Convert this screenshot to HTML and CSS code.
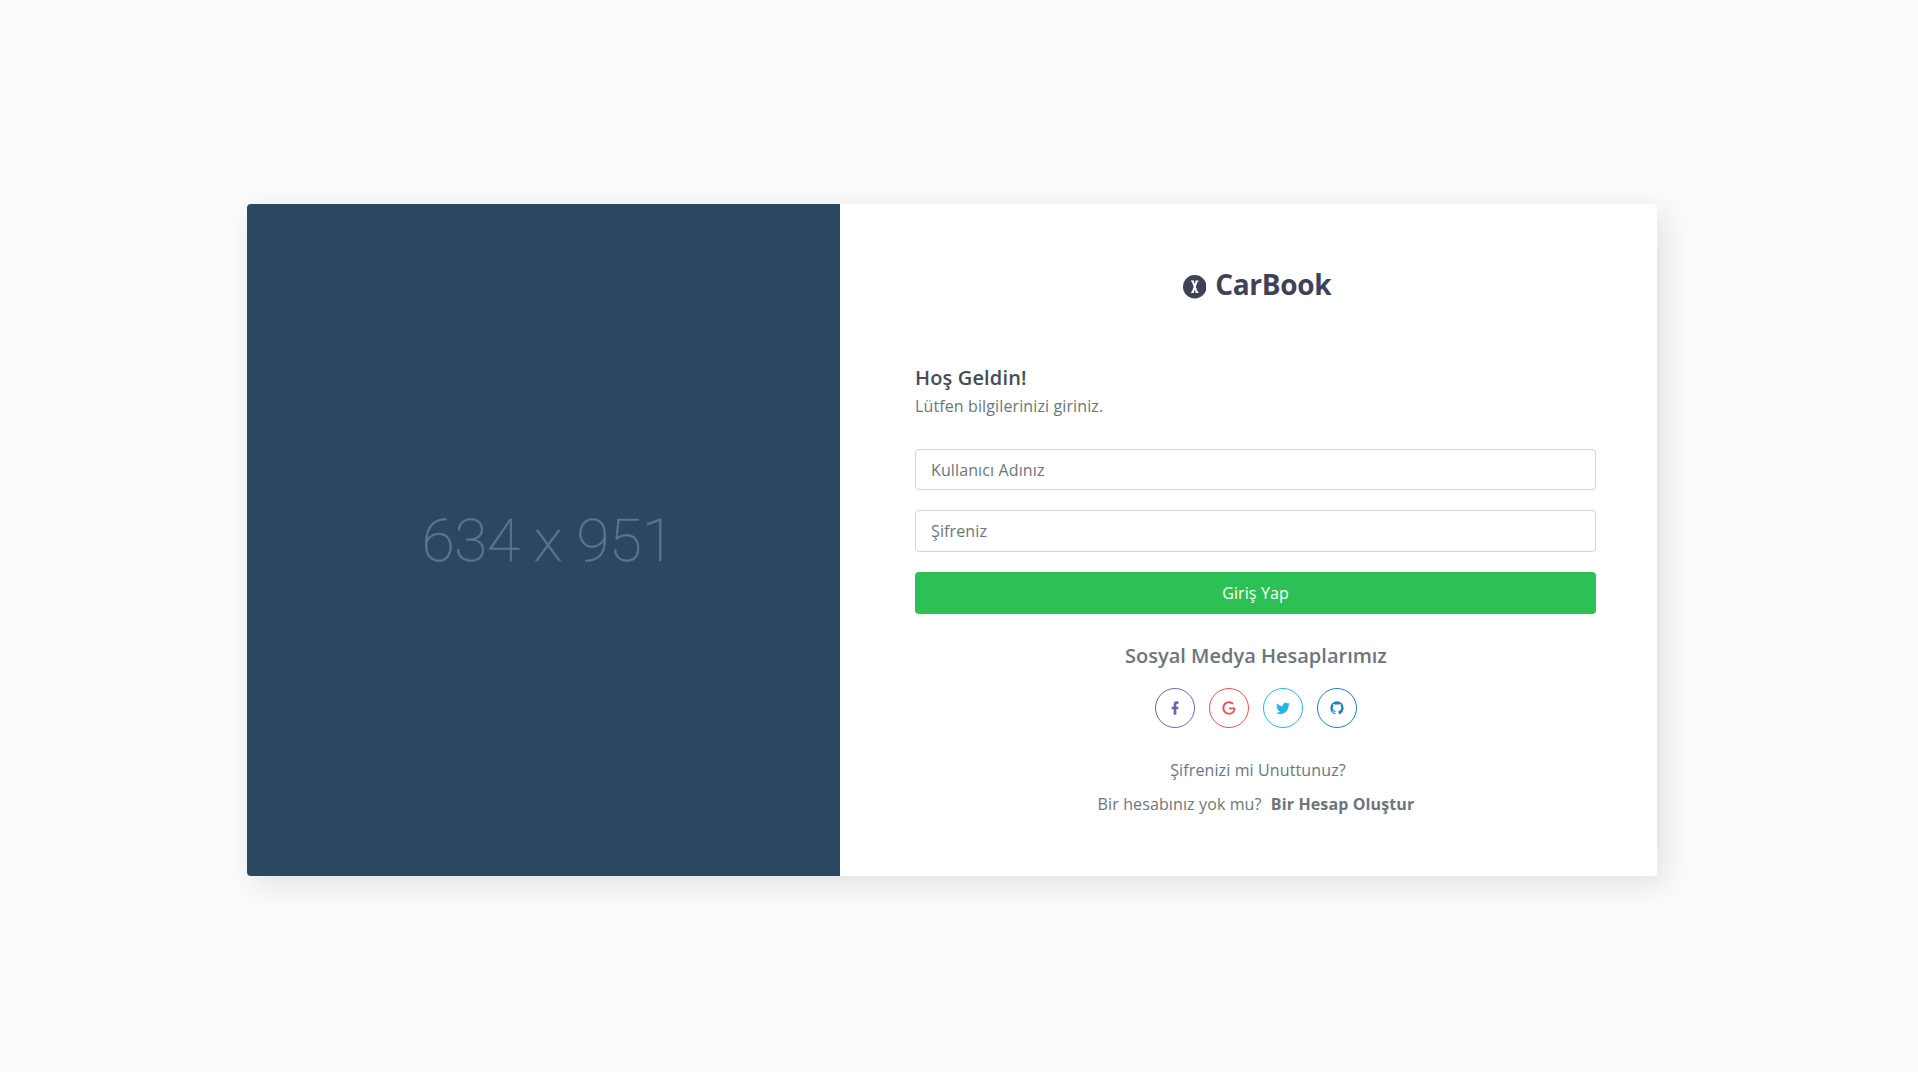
FILE: index.html
```html
<!DOCTYPE html>
<html lang="tr">
<head>
<meta charset="utf-8">
<title>CarBook</title>
<link rel="stylesheet" href="styles.css">
</head>
<body>
<main class="card">
  <div class="cover"><span class="cover-size">634 x 951</span></div>
  <section class="panel">
    <div class="brand">
      <svg class="brand-icon" viewBox="0 0 24 24"><circle cx="12" cy="12" r="12" fill="#3e4257"/><path d="M9.9 6.2L14.1 17.8M14.1 6.2L9.9 17.8" fill="none" stroke="#fff" stroke-width="2"/><path d="M8.2 6.2h3M12.8 6.2h3M8.2 17.8h3M12.8 17.8h3" fill="none" stroke="#fff" stroke-width="1.2"/></svg>
      <span>CarBook</span>
    </div>
    <h5 class="welcome">Hoş Geldin!</h5>
    <p class="lead">Lütfen bilgilerinizi giriniz.</p>
    <form class="form">
      <input class="field" type="text" placeholder="Kullanıcı Adınız">
      <input class="field" type="password" placeholder="Şifreniz">
      <button class="submit" type="button">Giriş Yap</button>
    </form>
    <h5 class="social-title">Sosyal Medya Hesaplarımız</h5>
    <div class="social">
      <a class="social-link facebook"><svg viewBox="0 0 24 24"><path d="M17 2v4h-2c-.69 0-1 .81-1 1.5V10h3v4h-3v8h-4v-8H7v-4h3V6a4 4 0 0 1 4-4h3z"/></svg></a>
      <a class="social-link google"><svg viewBox="0 0 24 24"><path d="M21.35 11.1h-9.17v2.73h6.51c-.33 3.81-3.5 5.44-6.5 5.44C8.36 19.27 5 16.25 5 12c0-4.1 3.2-7.27 7.2-7.27 3.09 0 4.9 1.97 4.9 1.97L19 4.72S16.56 2 12.1 2C6.42 2 2.03 6.8 2.03 12c0 5.05 4.13 10 10.22 10 5.35 0 9.25-3.67 9.25-9.09 0-1.15-.15-1.81-.15-1.81z"/></svg></a>
      <a class="social-link twitter"><svg viewBox="0 0 24 24"><path d="M22.46 6c-.77.35-1.6.58-2.46.69.88-.53 1.56-1.37 1.88-2.38-.83.5-1.75.85-2.72 1.05C18.37 4.5 17.26 4 16 4c-2.35 0-4.27 1.92-4.27 4.29 0 .34.04.67.11.98C8.28 9.09 5.11 7.38 3 4.79c-.37.63-.58 1.37-.58 2.15 0 1.49.75 2.81 1.91 3.56-.71 0-1.37-.2-1.95-.5v.03c0 2.08 1.48 3.82 3.44 4.21a4.22 4.22 0 0 1-1.93.07 4.28 4.28 0 0 0 4 2.98 8.521 8.521 0 0 1-5.33 1.84c-.34 0-.68-.02-1.02-.06C3.44 20.29 5.7 21 8.12 21 16 21 20.33 14.46 20.33 8.79c0-.19 0-.37-.01-.56.84-.6 1.56-1.36 2.14-2.23z"/></svg></a>
      <a class="social-link github"><svg viewBox="0 0 24 24"><path d="M12 2A10 10 0 0 0 2 12c0 4.42 2.87 8.17 6.84 9.5.5.08.66-.23.66-.5v-1.69c-2.77.6-3.36-1.34-3.36-1.34-.46-1.16-1.11-1.47-1.11-1.47-.91-.62.07-.6.07-.6 1 .07 1.53 1.03 1.53 1.03.87 1.52 2.34 1.07 2.91.83.09-.65.35-1.09.63-1.34-2.22-.25-4.55-1.11-4.55-4.92 0-1.11.38-2 1.03-2.71-.1-.25-.45-1.29.1-2.64 0 0 .84-.27 2.75 1.02.79-.22 1.65-.33 2.5-.33s1.71.11 2.5.33c1.91-1.29 2.75-1.02 2.75-1.02.55 1.35.2 2.39.1 2.64.65.71 1.03 1.6 1.03 2.71 0 3.82-2.34 4.66-4.57 4.91.36.31.69.92.69 1.85V21c0 .27.16.59.67.5C19.14 20.16 22 16.42 22 12A10 10 0 0 0 12 2z"/></svg></a>
    </div>
    <p class="forgot">Şifrenizi mi Unuttunuz?</p>
    <p class="register">Bir hesabınız yok mu? <a>Bir Hesap Oluştur</a></p>
  </section>
</main>
</body>
</html>
```
FILE: styles.css
```css
* { box-sizing: border-box; }
body {
  margin: 0;
  height: 1072px;
  padding: 204px 0 0 247px;
  background: #fbfbfb;
  color: #6c757d;
  font: 16px/24px "Open Sans", sans-serif;
  letter-spacing: .12px;
}
h5, p { margin: 0; }
.card {
  display: flex;
  width: 1410px;
  height: 672px;
  border-radius: 4px;
  background: #fff;
  box-shadow: 7px 8px 30px rgba(0, 0, 0, .11);
}
.cover {
  display: flex;
  align-items: center;
  justify-content: center;
  width: 593px;
  border-radius: 4px 0 0 4px;
  background: #2c4762;
}
.cover-size {
  padding: 2px 0 0 9px;
  color: #5a768f;
  font: 100 60px/72px Roboto, sans-serif;
  letter-spacing: -.2px;
  -webkit-text-stroke: .6px #5a768f;
}
.panel {
  flex: 1;
  padding: 61px 61px 0 75px;
}
.brand {
  display: flex;
  align-items: center;
  justify-content: center;
  gap: 9px;
  height: 38px;
  padding-left: 3px;
  color: #3e4257;
  font-size: 28px;
  font-weight: 700;
  letter-spacing: -.3px;
}
.brand-icon { width: 23.5px; height: 23.5px; margin-top: 6px; }
.welcome {
  margin-top: 63px;
  color: #464d55;
  font-size: 20px;
  font-weight: 600;
  line-height: 24px;
  letter-spacing: .15px;
}
.lead { margin-top: 4px; }
.form {
  display: grid;
  grid-template-rows: 41px 42px 42px;
  row-gap: 20px;
  margin-top: 31px;
}
.field {
  width: 100%;
  padding: 0 15px;
  border: 1px solid #ced4da;
  border-radius: 4px;
  background: #fff;
  font: inherit;
  letter-spacing: inherit;
}
.field::placeholder { color: #6c757d; opacity: 1; }
.submit {
  border: 0;
  border-radius: 4px;
  background: #2bc155;
  color: #fff;
  font: inherit;
  letter-spacing: inherit;
}
.social-title {
  margin-top: 30px;
  padding-left: 1px;
  font-size: 20px;
  font-weight: 600;
  line-height: 24px;
  letter-spacing: 0;
  text-align: center;
}
.social {
  display: flex;
  justify-content: center;
  gap: 14px;
  margin-top: 20px;
}
.social-link {
  display: grid;
  place-items: center;
  width: 40px;
  height: 40px;
  border: 1px solid;
  border-radius: 50%;
}
.social-link svg { width: 16px; height: 16px; fill: currentColor; }
.facebook { color: #7460ba; }
.google { color: #f0504f; }
.twitter { color: #23b5e5; }
.github { color: #1a80c4; }
.forgot { margin-top: 30px; padding-left: 5px; text-align: center; }
.register { margin-top: 10px; padding-left: 1px; text-align: center; }
.register a { margin-left: 5px; font-weight: 700; }
```
